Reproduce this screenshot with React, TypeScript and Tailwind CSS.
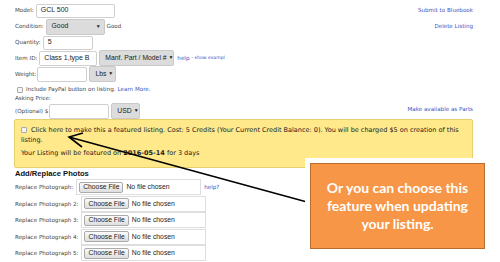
const label = "text-[5.6px] text-[#444] font-['DejaVu_Sans',sans-serif]";
const link = "text-[5.6px] text-[#3b55c4] font-['DejaVu_Sans',sans-serif]";
const inputCls =
  "h-[14px] rounded-[2px] border border-[#cfcfcf] bg-white px-[4px] flex items-center text-[7px] text-[#222] font-['Liberation_Sans',sans-serif]";

function Select({ text, w }: { text: string; w: string }) {
  return (
    <div
      className={`${w} h-[16px] ml-[2px] overflow-hidden whitespace-nowrap rounded-[2px] border border-[#c9c9c9] bg-[#dcdcdc] flex items-center justify-between pl-[5px] pr-[3px] text-[6.8px] text-[#222] font-['Liberation_Sans',sans-serif]`}
    >
      <span>{text}</span>
      <span className="ml-[2px] text-[5px]">▼</span>
    </div>
  );
}

function FileRow({ n, help }: { n: string; help?: boolean }) {
  return (
    <div className="flex h-[16.5px] items-center">
      <span className={label}>Replace Photograph{n}:</span>
      <div className="ml-[3px] flex h-[16px] w-[125px] items-center border border-[#dedede] bg-white pl-[2px]">
        <div className="flex h-[11px] items-center rounded-[2px] border border-[#aaa] bg-gradient-to-b from-[#fbfbfb] to-[#dedede] px-[3px] text-[6.8px] text-[#222] font-['Liberation_Sans',sans-serif]">
          Choose File
        </div>
        <span className="ml-[3px] text-[6.8px] text-[#222] font-['Liberation_Sans',sans-serif]">
          No file chosen
        </span>
      </div>
      {help && <span className={`${link} ml-[3px]`}>help?</span>}
    </div>
  );
}

export default function App() {
  return (
    <div className="relative h-[262px] w-[500px] overflow-hidden bg-white">
      <div className="pl-[15px] pr-[27px] pt-[3px]">
        <div className="flex h-[15px] items-center justify-between">
          <div className="flex items-center">
            <span className={label}>Model:</span>
            <div className={`${inputCls} ml-[2px] w-[79px]`}>GCL 500</div>
          </div>
          <span className={link}>Submit to Bluebook</span>
        </div>
        <div className="flex h-[17px] items-center justify-between">
          <div className="flex items-center">
            <span className={label}>Condition:</span>
            <Select text="Good" w="w-[59px]" />
            <span className={`${label} ml-[2px]`}>Good</span>
          </div>
          <span className={link}>Delete Listing</span>
        </div>
        <div className="flex h-[15px] items-center">
          <span className={label}>Quantity:</span>
          <div className={`${inputCls} ml-[2px] w-[50px]`}>5</div>
        </div>
        <div className="flex h-[16px] items-center">
          <span className={label}>Item ID:</span>
          <div className={`${inputCls} ml-[2px] h-[15px] w-[58px]`}>Class 1,type B</div>
          <Select text="Manf. Part / Model #" w="w-[75px]" />
          <span className={`${link} ml-[3px] text-[4.6px]`}>help</span>
          <span className="ml-[2px] text-[4.6px] text-[#3b55c4] font-['DejaVu_Sans',sans-serif]">
            - show exampl
          </span>
        </div>
        <div className="flex h-[16px] items-center">
          <span className={label}>Weight:</span>
          <div className={`${inputCls} ml-[1px] h-[15px] w-[50px]`}></div>
          <Select text="Lbs" w="w-[27px]" />
        </div>
        <div className="mt-[3px] flex h-[9px] items-center">
          <div className="ml-[2px] h-[6px] w-[6px] rounded-[1px] border border-[#aaa] bg-[#f4f4f4]" />
          <span className={`${label} ml-[3px]`}>Include PayPal button on listing.</span>
          <span className={`${link} ml-[2px]`}>Learn More.</span>
        </div>
        <div className="flex h-[9px] items-center">
          <span className={label}>Asking Price:</span>
        </div>
        <div className="flex h-[16px] justify-between">
          <div className="flex items-center">
            <span className={label}>(Optional) $</span>
            <div className={`${inputCls} ml-[1px] h-[15px] w-[60px]`}></div>
            <Select text="USD" w="w-[29px]" />
          </div>
          <span className={`${link} mt-[2px]`}>Make available as Parts</span>
        </div>
      </div>

      <div className="ml-[14px] h-[49px] w-[459px] rounded-[2px] border border-[#e6cf6e] bg-[#ffe98a] pl-[6px] pt-[5px] text-[6.5px] leading-[10px] text-[#222] font-['DejaVu_Sans',sans-serif]">
        <p>
          <span className="mr-[4px] inline-block h-[6px] w-[6px] rounded-[1px] border border-[#aaa] bg-[#f4f4f4] align-middle" />
          Click here to make this a featured listing. Cost: 5 Credits (Your Current Credit Balance: 0). You will be charged $5 on creation of this listing.
        </p>
        <p className="mt-[3px]">
          Your Listing will be featured on <b>2016-05-14</b> for 3 days
        </p>
      </div>

      <div className="pl-[15px]">
        <h2 className="mt-[1px] h-[10px] text-[7.6px] font-bold leading-[10px] text-[#111] font-['Liberation_Sans',sans-serif]">
          Add/Replace Photos
        </h2>
        <FileRow n="" help />
        <FileRow n=" 2" />
        <FileRow n=" 3" />
        <FileRow n=" 4" />
        <FileRow n=" 5" />
        <div className="h-[10px] w-[40px] rounded-t-[2px] bg-[#b5262a]" />
      </div>

      <svg className="absolute left-0 top-0" width="500" height="262">
        <line x1="69" y1="137" x2="307" y2="202" stroke="#000" strokeWidth="1.6" />
        <polyline points="83,133 69,137 82,147" fill="none" stroke="#000" strokeWidth="1.6" />
      </svg>

      <div className="absolute left-[305px] top-[158px] bg-white p-[5px]">
        <div className="flex h-[86px] w-[175px] items-center justify-center border border-[#b86d2e] bg-[#f79646] text-center text-[14px] font-bold leading-[18px] text-white font-['Lato',sans-serif]">
          <p>
            Or you can choose this
            <br />
            feature when updating
            <br />
            your listing.
          </p>
        </div>
      </div>
    </div>
  );
}
